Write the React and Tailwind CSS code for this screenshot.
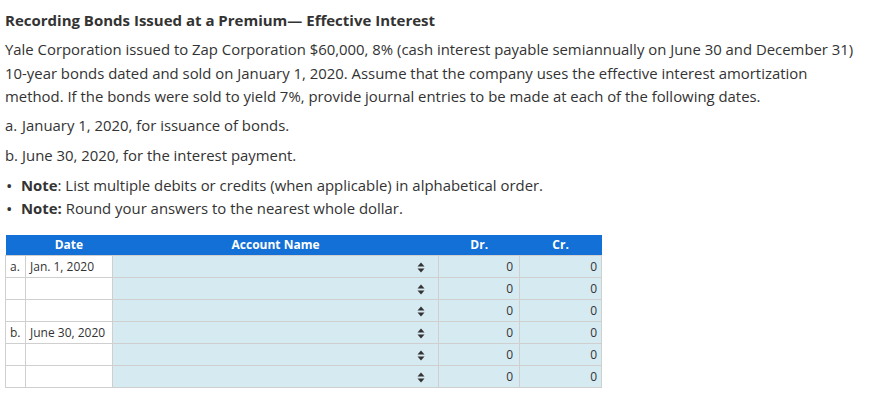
const rows = [
    { tag: 'a.', date: 'Jan. 1, 2020' },
    { tag: '', date: '' },
    { tag: '', date: '' },
    { tag: 'b.', date: 'June 30, 2020' },
    { tag: '', date: '' },
    { tag: '', date: '' },
];

function Arrows() {
    return (
        <svg width="8" height="11" viewBox="0 0 8 11" className="inline-block">
            <path d="M4 0.5 L7.5 4.5 L0.5 4.5 Z" fill="#333" />
            <path d="M4 10.5 L7.5 6.5 L0.5 6.5 Z" fill="#333" />
        </svg>
    );
}

export default function App() {
    return (
        <div className="bg-white px-[5px] pt-[9px] text-[#333]" style={{ fontFamily: '"Open Sans", sans-serif' }}>
            <h3 className="text-[15px] font-bold leading-[22px]">Recording Bonds Issued at a Premium— Effective Interest</h3>
            <p className="mt-[7px] text-[14.9px] leading-[23.5px]">
                Yale Corporation issued to Zap Corporation $60,000, 8% (cash interest payable semiannually on June 30 and December 31)<br />
                10-year bonds dated and sold on January 1, 2020. Assume that the company uses the effective interest amortization<br />
                method. If the bonds were sold to yield 7%, provide journal entries to be made at each of the following dates.
            </p>
            <p className="mt-[5px] flex text-[14.9px] leading-[23px]"><span className="w-[17px]">a.</span>January 1, 2020, for issuance of bonds.</p>
            <p className="mt-[7px] flex text-[14.9px] leading-[23px]"><span className="w-[17px]">b.</span>June 30, 2020, for the interest payment.</p>
            <ul className="mt-[7px] text-[14.9px] leading-[23px]">
                <li className="flex"><span className="w-[16px] pl-[1px] text-[17px]">•</span><span><b>Note</b>: List multiple debits or credits (when applicable) in alphabetical order.</span></li>
                <li className="flex"><span className="w-[16px] pl-[1px] text-[17px]">•</span><span><b>Note:</b> Round your answers to the nearest whole dollar.</span></li>
            </ul>
            <table className="mt-[15px] w-[597px] border-collapse text-[12px]">
                <thead>
                    <tr className="h-[21px] bg-[#1270d6] text-white">
                        <th className="w-[20px]"></th>
                        <th className="w-[87px] font-bold">Date</th>
                        <th className="w-[327px] font-bold">Account Name</th>
                        <th className="w-[81px] font-bold">Dr.</th>
                        <th className="w-[82px] font-bold">Cr.</th>
                    </tr>
                </thead>
                <tbody>
                    {rows.map((row, i) => (
                        <tr key={i} className="h-[22px]">
                            <td className="border border-[#cfcfcf] pl-[4px]">{row.tag}</td>
                            <td className="border border-[#cfcfcf] pl-[4px]">{row.date}</td>
                            <td className="border border-[#cfcfcf] bg-[#d6eaf2] pr-[13px] text-right"><Arrows /></td>
                            <td className="border border-[#cfcfcf] bg-[#d6eaf2] pr-[6px] text-right">0</td>
                            <td className="border border-[#cfcfcf] bg-[#d6eaf2] pr-[4px] text-right">0</td>
                        </tr>
                    ))}
                </tbody>
            </table>
        </div>
    );
}
